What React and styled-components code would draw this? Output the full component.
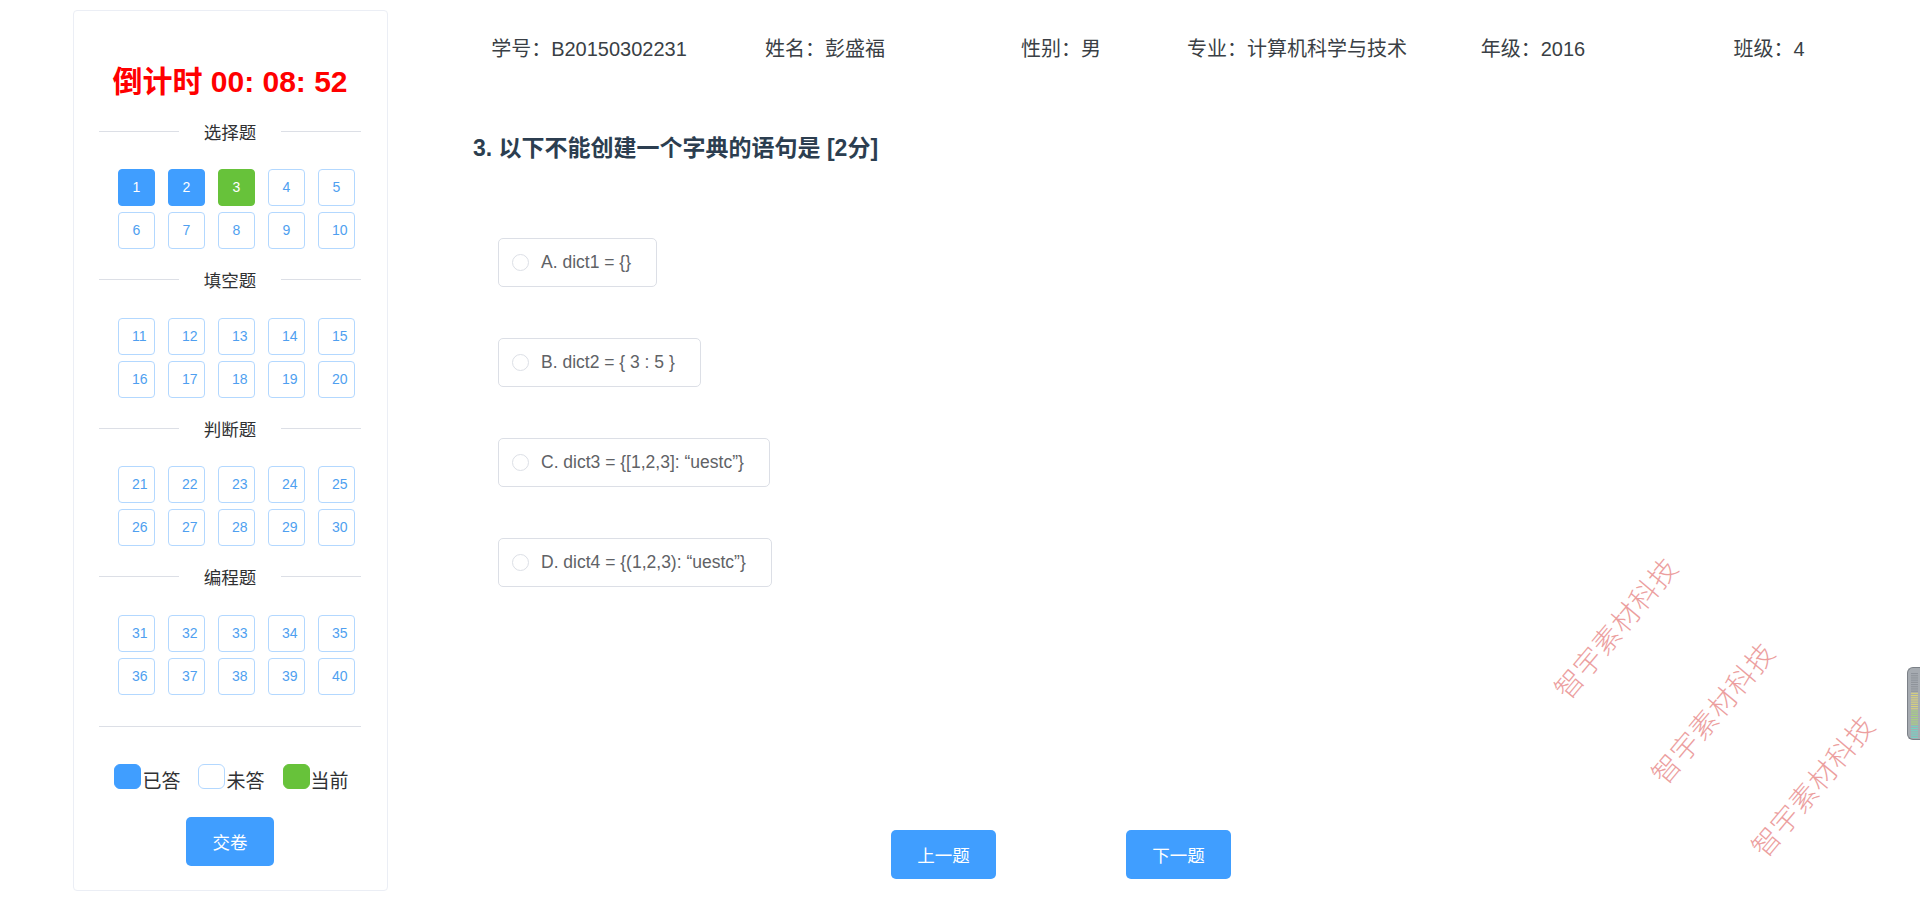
import React from 'react';
import styled, { createGlobalStyle } from 'styled-components';

const sections = [
  { title: '选择题', from: 1 },
  { title: '填空题', from: 11 },
  { title: '判断题', from: 21 },
  { title: '编程题', from: 31 },
];

const info = [
  '学号：B20150302231',
  '姓名：彭盛福',
  '性别：男',
  '专业：计算机科学与技术',
  '年级：2016',
  '班级：4',
];

const options = [
  'A. dict1 = {}',
  'B. dict2 = { 3 : 5 }',
  'C. dict3 = {[1,2,3]: “uestc”}',
  'D. dict4 = {(1,2,3): “uestc”}',
];

const watermarks = [
  { x: 1615, y: 627 },
  { x: 1712, y: 712 },
  { x: 1812, y: 785 },
];

const stateOf = (n) => {
  if (n === 3) return 'current';
  if (n < 3) return 'done';
  return 'todo';
};

const App = () => {
  return (
    <>
      <GlobalStyle />
      <Page>
        <Sidebar>
          <Timer>倒计时 00: 08: 52</Timer>
          {sections.map((s) => (
            <Section key={s.title}>
              <Divider>
                <Line />
                <DividerText>{s.title}</DividerText>
                <Line />
              </Divider>
              <NumGrid>
                {Array.from({ length: 10 }, (_, i) => s.from + i).map((n) => (
                  <NumButton key={n} $state={stateOf(n)}>
                    {n}
                  </NumButton>
                ))}
              </NumGrid>
            </Section>
          ))}
          <Rule />
          <Legend>
            <LegendItem>
              <Swatch $state="done" />
              <LegendText>已答</LegendText>
            </LegendItem>
            <LegendItem>
              <Swatch $state="todo" />
              <LegendText>未答</LegendText>
            </LegendItem>
            <LegendItem>
              <Swatch $state="current" />
              <LegendText>当前</LegendText>
            </LegendItem>
          </Legend>
          <SubmitButton>交卷</SubmitButton>
        </Sidebar>

        <Main>
          <InfoRow>
            {info.map((t) => (
              <InfoItem key={t}>{t}</InfoItem>
            ))}
          </InfoRow>
          <QuestionTitle>3. 以下不能创建一个字典的语句是 [2分]</QuestionTitle>
          <OptionList>
            {options.map((o) => (
              <Option key={o}>
                <Radio />
                <OptionLabel>{o}</OptionLabel>
              </Option>
            ))}
          </OptionList>
          <Nav>
            <NavButton>上一题</NavButton>
            <NavButton>下一题</NavButton>
          </Nav>
        </Main>

        {watermarks.map((w, i) => (
          <Watermark key={i} style={{ left: w.x, top: w.y }}>
            智宇素材科技
          </Watermark>
        ))}

        <EdgeTab>
          <svg width="13" height="73" viewBox="0 0 13 73">
            {Array.from({ length: 30 }, (_, i) => {
              const y = 5 + i * 2.2;
              let c = '#8e939a';
              if (i > 8) c = '#d9d27a';
              if (i > 16) c = '#a8d37c';
              if (i > 23) c = '#74d3c2';
              return <rect key={i} x="4" y={y} width="7" height="1.1" fill={c} />;
            })}
          </svg>
        </EdgeTab>
      </Page>
    </>
  );
};

export default App;

const GlobalStyle = createGlobalStyle`
  body {
    margin: 0;
    background: #ffffff;
    font-family: "Liberation Sans", "Noto Sans CJK SC", sans-serif;
  }
`;

const Page = styled.div`
  position: relative;
  display: flex;
  align-items: flex-start;
  width: 1920px;
  height: 910px;
  overflow: hidden;
`;

const Sidebar = styled.aside`
  box-sizing: border-box;
  display: flex;
  flex-direction: column;
  flex-shrink: 0;
  width: 315px;
  margin: 10px 0 0 73px;
  padding: 51px 26px 24px 25px;
  border: 1px solid #ebeef5;
  border-radius: 4px;
`;

const Timer = styled.div`
  height: 40px;
  line-height: 40px;
  margin-bottom: 19px;
  text-align: center;
  font-size: 30px;
  font-weight: 700;
  color: #ff0000;
  white-space: nowrap;
`;

const Section = styled.div`
  margin-bottom: 20.5px;
`;

const Divider = styled.div`
  display: flex;
  align-items: center;
  height: 20px;
`;

const Line = styled.div`
  flex: 1;
  height: 1px;
  background: #dcdfe6;
`;

const DividerText = styled.span`
  margin: 0 25px;
  font-size: 17.5px;
  color: #303133;
  white-space: nowrap;
`;

const NumGrid = styled.div`
  display: grid;
  grid-template-columns: repeat(5, 37px);
  column-gap: 13px;
  row-gap: 6px;
  margin-top: 28px;
  padding-left: 19px;
`;

const NumButton = styled.div`
  box-sizing: border-box;
  width: 37px;
  height: 37px;
  padding: 0 13px;
  line-height: 35px;
  text-align: center;
  white-space: nowrap;
  font-size: 14px;
  border-radius: 4px;
  border: 1px solid
    ${(p) =>
      p.$state === 'done' ? '#409eff' : p.$state === 'current' ? '#67c23a' : '#b3d8ff'};
  background: ${(p) =>
    p.$state === 'done' ? '#409eff' : p.$state === 'current' ? '#67c23a' : '#ffffff'};
  color: ${(p) => (p.$state === 'todo' ? '#4f9ff0' : '#ffffff')};
`;

const Rule = styled.div`
  height: 1px;
  margin-top: 10.5px;
  background: #dcdfe6;
`;

const Legend = styled.div`
  display: flex;
  justify-content: center;
  gap: 18px;
  height: 25px;
  margin-top: 37.5px;
  padding-left: 3px;
`;

const LegendItem = styled.div`
  display: flex;
  align-items: flex-end;
`;

const Swatch = styled.span`
  box-sizing: border-box;
  width: 27px;
  height: 25px;
  margin-right: 1px;
  border-radius: 6px;
  border: 1px solid
    ${(p) =>
      p.$state === 'done' ? '#409eff' : p.$state === 'current' ? '#67c23a' : '#b3d8ff'};
  background: ${(p) =>
    p.$state === 'done' ? '#409eff' : p.$state === 'current' ? '#67c23a' : '#ffffff'};
`;

const LegendText = styled.span`
  font-size: 19px;
  line-height: 19px;
  margin-bottom: -2px;
  color: #303133;
`;

const SubmitButton = styled.button`
  align-self: center;
  width: 88px;
  height: 49px;
  margin-top: 28px;
  border: none;
  border-radius: 5px;
  background: #409eff;
  color: #ffffff;
  font-family: inherit;
  font-size: 17.5px;
`;

const Main = styled.main`
  flex-shrink: 0;
  width: 1416px;
  margin-left: 83px;
  padding-top: 34px;
`;

const InfoRow = styled.div`
  display: grid;
  grid-template-columns: repeat(6, 1fr);
  height: 30px;
`;

const InfoItem = styled.div`
  line-height: 30px;
  text-align: center;
  font-size: 20px;
  color: #3a3f45;
  white-space: nowrap;
`;

const QuestionTitle = styled.h3`
  margin: 69px 0 0;
  padding-left: 2px;
  height: 30px;
  line-height: 30px;
  font-size: 23px;
  font-weight: 700;
  color: #2c3e50;
`;

const OptionList = styled.div`
  display: flex;
  flex-direction: column;
  align-items: flex-start;
  gap: 51px;
  margin-top: 75px;
  padding-left: 27px;
`;

const Option = styled.label`
  box-sizing: border-box;
  display: flex;
  align-items: center;
  height: 49px;
  padding: 0 25px 0 13px;
  border: 1px solid #dcdfe6;
  border-radius: 5px;
`;

const Radio = styled.span`
  box-sizing: border-box;
  width: 17px;
  height: 17px;
  margin-right: 12px;
  border: 1px solid #dcdfe6;
  border-radius: 50%;
  background: #ffffff;
`;

const OptionLabel = styled.span`
  font-size: 17.5px;
  color: #606266;
  white-space: nowrap;
`;

const Nav = styled.div`
  display: flex;
  gap: 130px;
  margin-top: 243px;
  padding-left: 420px;
`;

const NavButton = styled.button`
  width: 105px;
  height: 49px;
  border: none;
  border-radius: 5px;
  background: #409eff;
  color: #ffffff;
  font-family: inherit;
  font-size: 17.5px;
`;

const Watermark = styled.div`
  position: absolute;
  transform: translate(-50%, -50%) rotate(-50deg);
  font-size: 28px;
  font-weight: 300;
  letter-spacing: 1px;
  color: #ec9f9f;
  white-space: nowrap;
  pointer-events: none;
`;

const EdgeTab = styled.div`
  position: absolute;
  right: 0;
  top: 667px;
  width: 13px;
  height: 73px;
  box-sizing: border-box;
  border: 1px solid #7b8087;
  border-right: none;
  border-radius: 6px 0 0 6px;
  background: #a6abb1;
  overflow: hidden;

  svg {
    display: block;
    margin-left: -1px;
  }
`;
